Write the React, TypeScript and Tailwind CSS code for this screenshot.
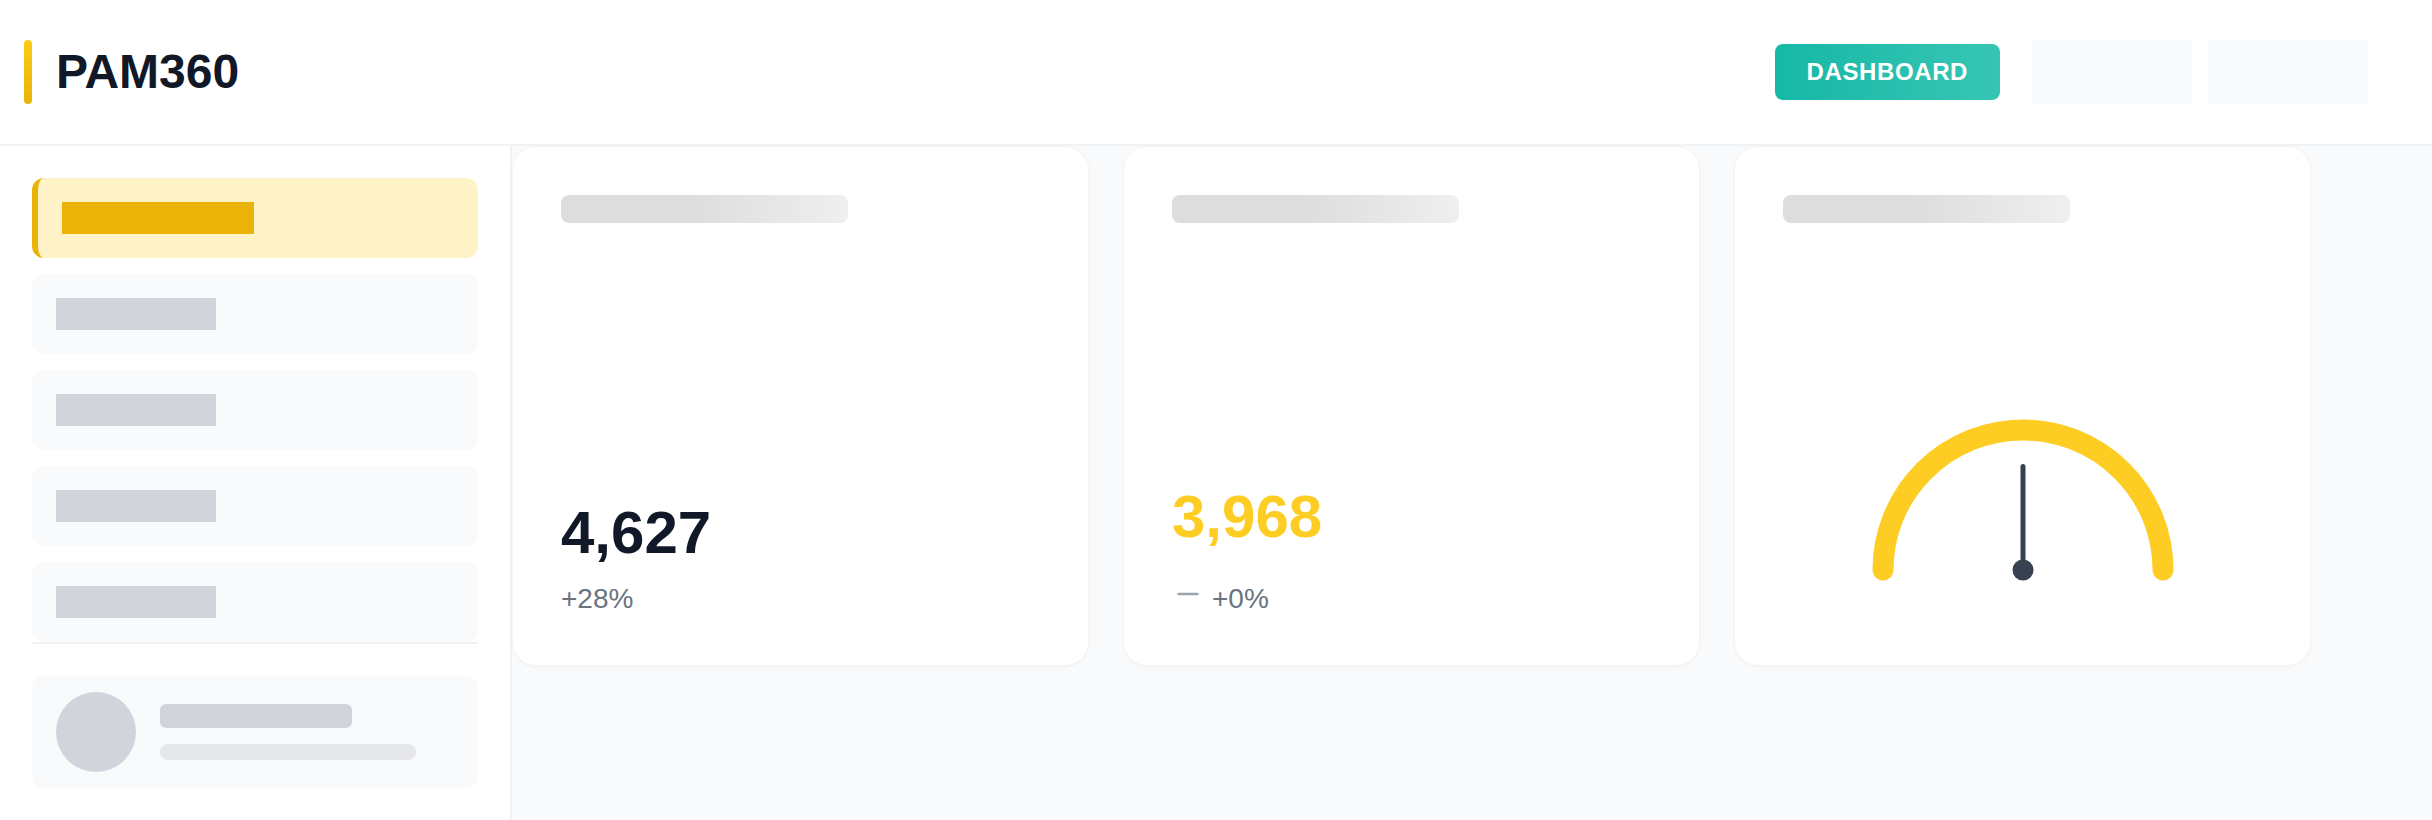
import { Minus } from "lucide-react";

const NAV = [0, 1, 2, 3];

function TitleBar() {
  return <div className="h-7 w-[60%] rounded-lg bg-linear-to-r from-[#dddddd] from-45% to-[#efefef]" />;
}

function Gauge() {
  return (
    <svg width="300" height="161" viewBox="0 0 300 161" className="overflow-visible">
      <path
        d="M 10 150 A 140 140 0 0 1 290 150"
        fill="none"
        stroke="#fdcd24"
        strokeWidth="21"
        strokeLinecap="round"
      />
      <line x1="150" y1="150" x2="150" y2="46.5" stroke="#374151" strokeWidth="5" strokeLinecap="round" />
      <circle cx="150" cy="150" r="10.5" fill="#374151" />
    </svg>
  );
}

export default function App() {
  return (
    <div className="flex min-h-screen flex-col bg-white font-['Liberation_Sans',Arial,sans-serif]">
      {/* Header */}
      <header className="flex h-[146px] items-center border-b-2 border-[#f1f2f4] pl-6 pr-16">
        <div className="h-16 w-2 rounded-full bg-linear-to-b from-[#facc15] to-[#eab308]" />
        <h1 className="ml-6 text-5xl font-bold text-[#111827]">PAM360</h1>
        <div className="ml-auto flex items-center">
          <button className="rounded-lg bg-linear-to-r from-[#14b8a6] to-[#36c5b5] px-8 py-3 text-2xl font-bold tracking-wide text-white">
            DASHBOARD
          </button>
          <div className="ml-8 h-16 w-40 bg-[#f9fafb]" />
          <div className="ml-4 h-16 w-40 bg-[#f9fafb]" />
        </div>
      </header>

      <div className="flex flex-1">
        {/* Sidebar */}
        <aside className="w-[512px] shrink-0 border-r-2 border-[#f1f2f4] bg-white px-8 pt-8">
          <nav className="flex flex-col gap-4 border-b-2 border-[#f1f2f4]">
            <div className="h-20 rounded-xl border-l-[6px] border-[#eab308] bg-[#fef3c7] p-6">
              <div className="h-8 w-48 bg-[#eab308]" />
            </div>
            {NAV.map((i) => (
              <div key={i} className="h-20 rounded-xl bg-[#f9fafb] p-6">
                <div className="h-8 w-40 bg-[#d1d5db]" />
              </div>
            ))}
          </nav>

          {/* Profile */}
          <div className="mt-8 flex items-center gap-6 rounded-xl bg-[#f9fafb] px-6 py-4">
            <div className="h-20 w-20 rounded-full bg-[#d1d5db]" />
            <div className="flex flex-col gap-4">
              <div className="h-6 w-48 rounded-md bg-[#d1d5db]" />
              <div className="h-4 w-64 rounded-full bg-[#e5e7eb]" />
            </div>
          </div>
        </aside>

        {/* Main */}
        <main className="flex flex-1 items-start gap-[34px] bg-[#f9fafb]">
          <div className="flex h-[520px] w-[577px] flex-col rounded-3xl border border-[#f5f5f6] bg-white px-12 pt-12 pb-[45px] shadow-[0_1px_3px_rgba(0,0,0,0.04)]">
            <TitleBar />
            <div className="mt-auto text-6xl leading-none font-bold text-[#111827]">4,627</div>
            <div className="mt-[15px] text-[28px] leading-[42px] text-[#6b7280]">+28%</div>
          </div>

          <div className="flex h-[520px] w-[577px] flex-col rounded-3xl border border-[#f5f5f6] bg-white px-12 pt-12 pb-[45px] shadow-[0_1px_3px_rgba(0,0,0,0.04)]">
            <TitleBar />
            <div className="mt-auto text-6xl leading-none font-bold text-[#fdcd24]">3,968</div>
            <div className="mt-[31px] flex items-start gap-2">
              <Minus size={32} className="text-[#9ca3af]" />
              <span className="text-[28px] leading-[42px] text-[#6b7280]">+0%</span>
            </div>
          </div>

          <div className="flex h-[520px] w-[577px] flex-col rounded-3xl border border-[#f5f5f6] bg-white p-12 shadow-[0_1px_3px_rgba(0,0,0,0.04)]">
            <TitleBar />
            <div className="mt-auto mb-9 flex justify-center">
              <Gauge />
            </div>
          </div>
        </main>
      </div>
    </div>
  );
}
